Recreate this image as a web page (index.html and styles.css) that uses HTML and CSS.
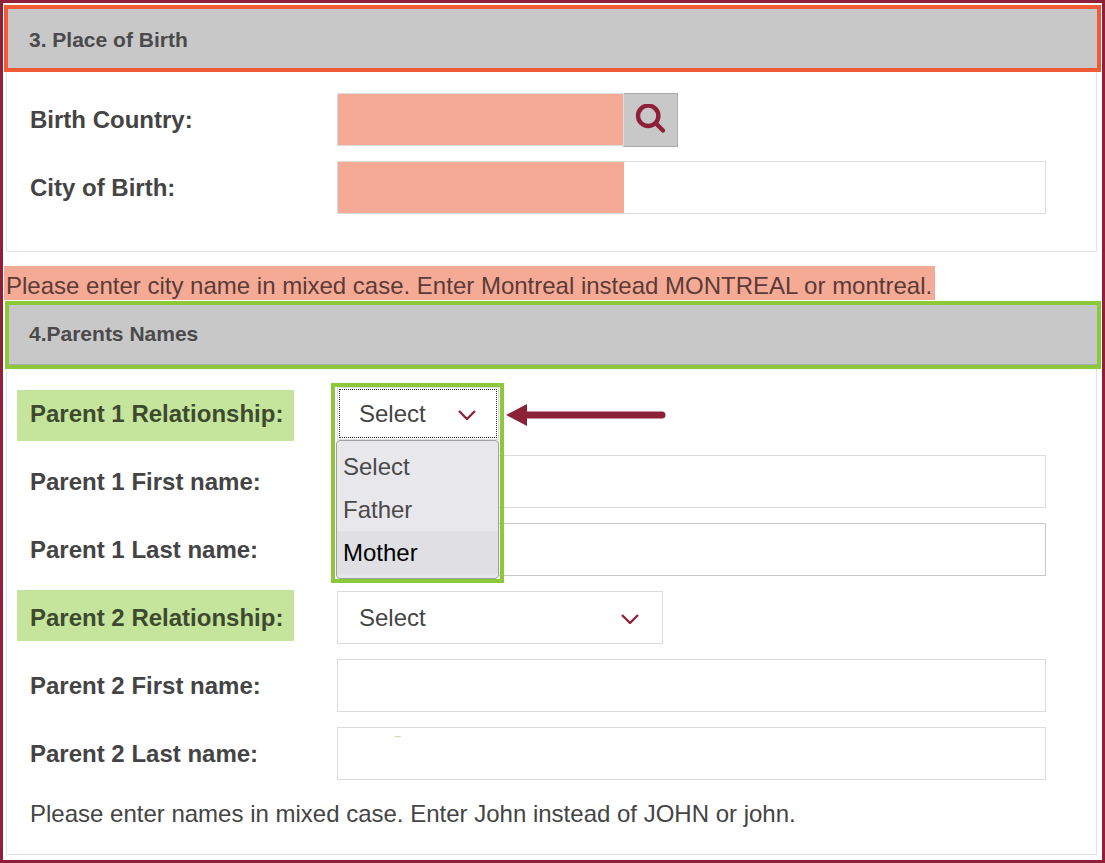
FILE: index.html
```html
<!DOCTYPE html>
<html lang="en">
<head>
    <meta charset="UTF-8" />
    <meta name="viewport" content="width=device-width, initial-scale=1" />
    <title>Place of Birth and Parents Names</title>
    <link rel="stylesheet" href="styles.css">
</head>
<body>
    <div class="frame">
        <h3 class="section-head head-orange">3. Place of Birth</h3>
        <div class="panel panel-birth">
            <div class="row">
                <label class="label">Birth Country:</label>
                <div class="field field-country"><span class="redact"></span></div>
                <button class="search-btn" aria-label="Search">
                    <svg width="32" height="32" viewBox="0 0 32 32">
                        <circle cx="13.2" cy="11.800" r="10.200" fill="none" stroke="#8f2039" stroke-width="4.400" />
                        <path d="M21 19.500l7 7" fill="none" stroke="#8f2039" stroke-width="4.400" stroke-linecap="round" />
                    </svg>
                </button>
            </div>
            <div class="row">
                <label class="label">City of Birth:</label>
                <div class="field"><span class="redact"></span></div>
            </div>
        </div>

        <p class="notice">Please enter city name in mixed case. Enter Montreal instead MONTREAL or montreal.</p>

        <h3 class="section-head head-green">4.Parents Names</h3>
        <div class="panel panel-parents">
            <div class="row">
                <label class="label label-marked label-first">Parent 1 Relationship:</label>
                <div class="select select-open">
                    <span>Select</span>
                    <svg class="chevron" width="18" height="10" viewBox="0 0 18 10"><path d="M1 1l8 8 8-8" fill="none" stroke="#8f2039" stroke-width="2.300" /></svg>
                </div>
            </div>
            <div class="row">
                <label class="label">Parent 1 First name:</label>
                <div class="field"></div>
            </div>
            <div class="row">
                <label class="label">Parent 1 Last name:</label>
                <div class="field field-dark"></div>
            </div>
            <div class="row">
                <label class="label label-marked label-second">Parent 2 Relationship:</label>
                <div class="select">
                    <span>Select</span>
                    <svg class="chevron" width="18" height="10" viewBox="0 0 18 10"><path d="M1 1l8 8 8-8" fill="none" stroke="#8f2039" stroke-width="2.300" /></svg>
                </div>
            </div>
            <div class="row">
                <label class="label">Parent 2 First name:</label>
                <div class="field"></div>
            </div>
            <div class="row">
                <label class="label">Parent 2 Last name:</label>
                <div class="field"><span class="speck"></span></div>
            </div>
            <p class="help">Please enter names in mixed case. Enter John instead of JOHN or john.</p>
        </div>

        <!-- annotation over the open dropdown -->
        <div class="callout"></div>
        <ul class="dropdown">
            <li>Select</li>
            <li>Father</li>
            <li class="hover">Mother</li>
        </ul>
        <svg class="arrow" width="160" height="22" viewBox="0 0 160 22">
            <path d="M0 11L21 0v7.500h135a3.500 3.500 0 0 1 0 7H21V22z" fill="#8b2238" />
        </svg>
    </div>
</body>
</html>
```

FILE: styles.css
```css
html, body {
    margin: 0;
    padding: 0;
}
body {
    font-family: "Liberation Sans", Arial, sans-serif;
    font-size: 24px;
    color: #444;
    background: white;
}
.frame {
    position: relative;
    box-sizing: border-box;
    width: 1105px;
    height: 863px;
    border: 3px solid #8f2039;
    overflow: hidden;
}
.section-head {
    box-sizing: border-box;
    margin: 0;
    display: flex;
    align-items: center;
    background-color: #c8c8c8;
    font-size: 21px;
    font-weight: bold;
    color: #4a4a4a;
}
.head-orange {
    height: 67px;
    margin: 2px 1px 0 1px;
    padding: 2px 0 0 21px;
    border: 4px solid #f05a35;
}
.head-green {
    height: 68px;
    margin: 1px 1px 0 2px;
    padding: 0 0 2px 20px;
    border: 4px solid #8bc83a;
    box-shadow: inset 0 -1px 0 #aaa;
}
.panel {
    margin: 0 5px 0 3px;
    border: 1px solid #e3e3e3;
    border-top: none;
}
.panel-birth {
    height: 180px;
    box-sizing: border-box;
    padding-top: 21px;
}
.panel-parents {
    height: 486px;
    box-sizing: border-box;
    padding-top: 18px;
}
.row {
    display: flex;
    align-items: center;
    height: 53px;
    margin-bottom: 15px;
}
.label {
    box-sizing: border-box;
    width: 330px;
    padding-left: 23px;
    font-weight: bold;
}
.label-marked {
    width: 277px;
    height: 51px;
    margin: 3px 43px 0 10px;
    padding-left: 13px;
    display: flex;
    align-items: center;
    align-self: flex-start;
    background-color: #c5e59d;
    color: #3e4a2f;
}
.label-first {
    padding-bottom: 4px;
}
.label-second {
    margin-top: -1px;
    padding-top: 4px;
}
.field {
    position: relative;
    box-sizing: border-box;
    display: flex;
    width: 709px;
    height: 53px;
    border: 1px solid #dcdcdc;
}
.field-dark {
    border-color: #c8c8c8;
}
.field-country {
    width: 287px;
}
.redact {
    width: 286px;
    background-color: #f5aa96;
}
.speck {
    position: absolute;
    left: 57px;
    top: 8px;
    width: 6px;
    height: 1px;
    background-color: #c5e59d;
}
.search-btn {
    box-sizing: border-box;
    display: flex;
    align-items: center;
    justify-content: center;
    width: 55px;
    height: 54px;
    margin: 0 0 0 -1px;
    padding: 0;
    align-self: flex-start;
    background-color: #c8c8c8;
    border: 1px solid #aaa;
}
.select {
    box-sizing: border-box;
    display: flex;
    align-items: center;
    justify-content: space-between;
    width: 326px;
    height: 53px;
    padding: 0 23px 0 21px;
    border: 1px solid #dcdcdc;
}
.select-open {
    width: 162px;
    padding-right: 22px;
    outline: 1px dotted #333;
    outline-offset: -3px;
}
.chevron {
    display: block;
    margin-top: 2px;
}
.help {
    margin: 20px 0 0 23px;
    line-height: 28px;
}
.notice {
    box-sizing: border-box;
    width: 931px;
    height: 34px;
    margin: 14px 0 0 1px;
    padding-left: 2px;
    line-height: 39px;
    white-space: nowrap;
    background-color: #f5aa96;
    color: #5b3b36;
}
.callout {
    position: absolute;
    left: 328px;
    top: 380px;
    box-sizing: border-box;
    width: 173px;
    height: 200px;
    border: 4px solid #8bc83a;
}
.dropdown {
    position: absolute;
    left: 333px;
    top: 437px;
    box-sizing: border-box;
    width: 163px;
    height: 139px;
    margin: 0;
    padding: 4px 0 0;
    list-style: none;
    background-color: #e8e7ec;
    border: 1px solid #a0a0a0;
    border-radius: 4px;
}
.dropdown li {
    height: 43px;
    line-height: 43px;
    padding-left: 6px;
    color: #4a4a4a;
}
.dropdown li.hover {
    background-color: #e0dfe4;
    color: #000;
}
.arrow {
    position: absolute;
    left: 503px;
    top: 401px;
}
```
